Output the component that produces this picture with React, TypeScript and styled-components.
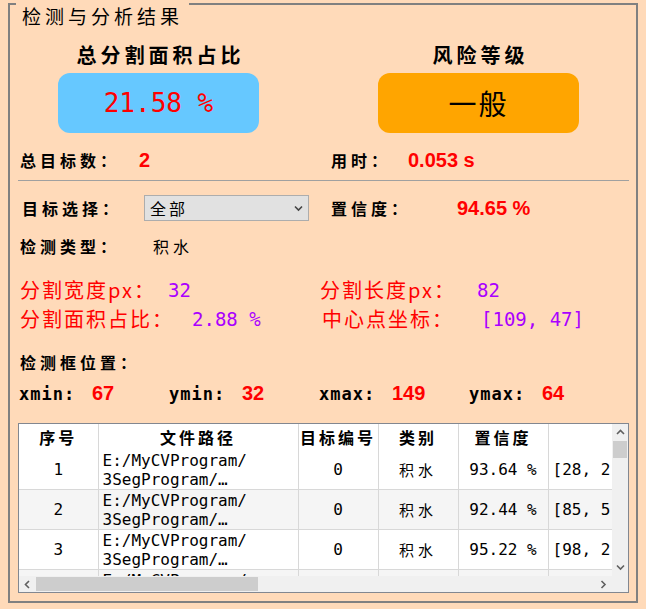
import React from 'react';
import styled, { createGlobalStyle } from 'styled-components';

const GlobalStyle = createGlobalStyle`
  html, body {
    margin: 0;
    padding: 0;
    background: #ffdab9;
  }
  body {
    font-family: "Noto Sans CJK SC", sans-serif;
    color: #000;
  }
`;

const Page = styled.div`
  padding: 3px 8px;
`;

const GroupBox = styled.section`
  position: relative;
  box-sizing: border-box;
  width: 630px;
  height: 600px;
  border: 2px solid #808080;
`;

const GroupTitle = styled.div`
  position: absolute;
  left: 6px;
  top: -3px;
  padding: 0 6px;
  background: #ffdab9;
  font-size: 19px;
  line-height: 28px;
  letter-spacing: 4px;
`;

const Summary = styled.div`
  display: flex;
  gap: 119px;
  padding: 38px 0 0 48px;
`;

const SummaryItem = styled.div`
  width: 201px;
  display: flex;
  flex-direction: column;
  align-items: center;
  gap: 6px;
`;

const SummaryTitle = styled.div`
  font-size: 20px;
  font-weight: bold;
  line-height: 24px;
  letter-spacing: 4px;
  margin-right: -4px;
`;

const Badge = styled.div<{ $bg: string }>`
  width: 100%;
  height: 60px;
  border-radius: 12px;
  background: ${p => p.$bg};
  display: flex;
  align-items: center;
  justify-content: center;
`;

const Percent = styled.span`
  font-family: "DejaVu Sans Mono", monospace;
  font-size: 26px;
  color: #ff0000;
`;

const Level = styled.span`
  font-size: 28px;
  letter-spacing: 2px;
`;

const InfoRow = styled.div<{ $top: number; $height?: number }>`
  display: grid;
  grid-template-columns: 311px 1fr;
  align-items: center;
  height: ${p => p.$height ?? 24}px;
  margin-top: ${p => p.$top}px;
  padding-left: 10px;
`;

const Field = styled.div<{ $indent?: number }>`
  display: flex;
  align-items: center;
  padding-left: ${p => p.$indent ?? 0}px;
`;

const Label = styled.span<{ $width?: number }>`
  flex: none;
  width: ${p => (p.$width ? `${p.$width}px` : 'auto')};
  font-size: 16px;
  font-weight: bold;
  letter-spacing: 4px;
  line-height: 24px;
  white-space: nowrap;
`;

const Value = styled.span`
  font-family: "Liberation Sans", Arial, sans-serif;
  font-weight: bold;
  font-size: 20px;
  color: #ff0000;
  white-space: nowrap;
`;

const Plain = styled.span`
  font-size: 16px;
  letter-spacing: 4px;
`;

const Divider = styled.hr`
  margin: 8px 7px 0 8px;
  border: none;
  border-top: 1px solid #a0a0a0;
  height: 0;
`;

const Combo = styled.div`
  box-sizing: border-box;
  width: 165px;
  height: 26px;
  background: #e1e1e1;
  border: 1px solid #adadad;
  display: flex;
  align-items: center;
  justify-content: space-between;
  padding: 0 5px 0 5px;
  font-size: 16px;
  letter-spacing: 3px;
`;

const MetricGrid = styled.div`
  display: grid;
  grid-template-columns: 300px 1fr;
  grid-auto-rows: 29px;
  align-items: center;
  margin-top: 17px;
  padding-left: 10px;
`;

const Metric = styled.div<{ $indent?: number }>`
  display: flex;
  align-items: center;
  padding-left: ${p => p.$indent ?? 0}px;
`;

const MetricLabel = styled.span<{ $width: number }>`
  flex: none;
  width: ${p => p.$width}px;
  font-size: 20px;
  letter-spacing: 2px;
  color: #ff0000;
  white-space: nowrap;
`;

const MetricValue = styled.span`
  font-family: "DejaVu Sans Mono", monospace;
  font-size: 19px;
  color: #aa00ff;
  white-space: nowrap;
`;

const Section = styled.div<{ $top: number }>`
  margin-top: ${p => p.$top}px;
  padding-left: 10px;
  height: 24px;
  display: flex;
  align-items: center;
`;

const CoordRow = styled.div`
  display: grid;
  grid-template-columns: repeat(4, 150px);
  align-items: center;
  height: 24px;
  margin-top: 7px;
  padding-left: 9px;
`;

const CoordLabel = styled.span`
  display: inline-block;
  width: 73px;
  font-family: "DejaVu Sans Mono", monospace;
  font-weight: bold;
  font-size: 17px;
  letter-spacing: 1px;
`;

const TableFrame = styled.div`
  box-sizing: border-box;
  width: 611px;
  height: 170px;
  margin: 18px 0 0 8px;
  border: 1px solid #828790;
  background: #fff;
  display: grid;
  grid-template-columns: 1fr 16px;
  grid-template-rows: 1fr 16px;
`;

const Viewport = styled.div`
  overflow: hidden;
`;

const DataTable = styled.table`
  border-collapse: collapse;
  table-layout: fixed;
  width: 593px;
`;

const HeadCell = styled.th`
  height: 26px;
  padding: 0;
  font-size: 16px;
  font-weight: bold;
  letter-spacing: 3px;
  text-align: center;
  border-right: 1px solid #d8d8d8;
  white-space: nowrap;
  overflow: hidden;
  &:last-child {
    border-right: none;
  }
`;

const BodyRow = styled.tr<{ $alt: boolean }>`
  background: ${p => (p.$alt ? '#f5f5f5' : '#fff')};
`;

const Cell = styled.td<{ $align?: 'left' | 'center'; $cjk?: boolean }>`
  height: 39px;
  padding: 0 0 0 ${p => (p.$align === 'left' ? '4px' : '0')};
  text-align: ${p => p.$align ?? 'center'};
  vertical-align: middle;
  font-family: ${p => (p.$cjk ? '"Noto Sans CJK SC", sans-serif' : '"DejaVu Sans Mono", monospace')};
  font-size: ${p => (p.$cjk ? 15 : 16)}px;
  letter-spacing: ${p => (p.$cjk ? 4 : 0)}px;
  border-right: 1px solid #d8d8d8;
  border-bottom: 1px solid #d8d8d8;
  white-space: nowrap;
  overflow: hidden;
  &:last-child {
    border-right: none;
  }
`;

const PathLine = styled.div`
  line-height: 19px;
`;

const VScroll = styled.div`
  background: #f0f0f0;
  display: flex;
  flex-direction: column;
`;

const HScroll = styled.div`
  background: #f0f0f0;
  display: flex;
  align-items: stretch;
`;

const Corner = styled.div`
  background: #f0f0f0;
`;

const ArrowButton = styled.div<{ $long?: boolean }>`
  flex: none;
  width: ${p => (p.$long ? 16 : 17)}px;
  height: ${p => (p.$long ? 17 : 16)}px;
  display: flex;
  align-items: center;
  justify-content: center;
`;

const Track = styled.div<{ $vertical?: boolean }>`
  flex: 1;
  display: flex;
  flex-direction: ${p => (p.$vertical ? 'column' : 'row')};
  padding: ${p => (p.$vertical ? '0 1px' : '1px 0')};
`;

const Thumb = styled.div<{ $size: number; $vertical?: boolean }>`
  flex: none;
  background: #cdcdcd;
  ${p => (p.$vertical ? `height: ${p.$size}px;` : `width: ${p.$size}px;`)}
`;

const Chevron = ({ dir, color = '#606060' }: { dir: 'up' | 'down' | 'left' | 'right'; color?: string }) => {
  const paths = {
    up: 'M1 5 L4.5 1.5 L8 5',
    down: 'M1 1.5 L4.5 5 L8 1.5',
    left: 'M5 1 L1.5 4.5 L5 8',
    right: 'M1.5 1 L5 4.5 L1.5 8',
  };
  const horizontal = dir === 'left' || dir === 'right';
  return (
    <svg
      width={horizontal ? 7 : 9}
      height={horizontal ? 9 : 7}
      viewBox={horizontal ? '0 0 7 9' : '0 0 9 7'}
      fill="none"
      stroke={color}
      strokeWidth={1.6}
    >
      <path d={paths[dir]} />
    </svg>
  );
};

type Row = { id: number; target: number; cls: string; conf: string; box: string };

// the box column is scrolled out of view; only its start shows
const rows: Row[] = [
  { id: 1, target: 0, cls: '积水', conf: '93.64 %', box: '[28, 2' },
  { id: 2, target: 0, cls: '积水', conf: '92.44 %', box: '[85, 5' },
  { id: 3, target: 0, cls: '积水', conf: '95.22 %', box: '[98, 2' },
  { id: 4, target: 0, cls: '积水', conf: '94.65 %', box: '[67, 3' },
];

const columns = [79, 200, 80, 80, 90, 64];
const headers = ['序号', '文件路径', '目标编号', '类别', '置信度', ''];

function ResultTable() {
  return (
    <TableFrame>
      <Viewport>
        <DataTable>
          <colgroup>
            {columns.map((w, i) => (
              <col key={i} style={{ width: w }} />
            ))}
          </colgroup>
          <thead>
            <tr>
              {headers.map((h, i) => (
                <HeadCell key={i}>{h}</HeadCell>
              ))}
            </tr>
          </thead>
          <tbody>
            {rows.map((r, i) => (
              <BodyRow key={r.id} $alt={i % 2 === 1}>
                <Cell>{r.id}</Cell>
                <Cell $align="left">
                  <PathLine>E:/MyCVProgram/</PathLine>
                  <PathLine>3SegProgram/…</PathLine>
                </Cell>
                <Cell>{r.target}</Cell>
                <Cell $cjk>{r.cls}</Cell>
                <Cell>{r.conf}</Cell>
                <Cell $align="left">{r.box}</Cell>
              </BodyRow>
            ))}
          </tbody>
        </DataTable>
      </Viewport>
      <VScroll>
        <ArrowButton $long>
          <Chevron dir="up" />
        </ArrowButton>
        <Track $vertical>
          <Thumb $vertical $size={17} />
        </Track>
        <ArrowButton $long>
          <Chevron dir="down" />
        </ArrowButton>
      </VScroll>
      <HScroll>
        <ArrowButton>
          <Chevron dir="left" />
        </ArrowButton>
        <Track>
          <Thumb $size={222} />
        </Track>
        <ArrowButton>
          <Chevron dir="right" />
        </ArrowButton>
      </HScroll>
      <Corner />
    </TableFrame>
  );
}

export default function App() {
  return (
    <Page>
      <GlobalStyle />
      <GroupBox>
        <GroupTitle>检测与分析结果</GroupTitle>

        <Summary>
          <SummaryItem>
            <SummaryTitle>总分割面积占比</SummaryTitle>
            <Badge $bg="#66c8ff">
              <Percent>21.58 %</Percent>
            </Badge>
          </SummaryItem>
          <SummaryItem>
            <SummaryTitle>风险等级</SummaryTitle>
            <Badge $bg="#ffa500">
              <Level>一般</Level>
            </Badge>
          </SummaryItem>
        </Summary>

        <InfoRow $top={15}>
          <Field>
            <Label $width={119}>总目标数：</Label>
            <Value>2</Value>
          </Field>
          <Field>
            <Label $width={77}>用时：</Label>
            <Value>0.053 s</Value>
          </Field>
        </InfoRow>

        <Divider />

        <InfoRow $top={14} $height={26}>
          <Field $indent={2}>
            <Label $width={122}>目标选择：</Label>
            <Combo>
              <span>全部</span>
              <Chevron dir="down" color="#444" />
            </Combo>
          </Field>
          <Field>
            <Label $width={126}>置信度：</Label>
            <Value>94.65 %</Value>
          </Field>
        </InfoRow>

        <Section $top={13}>
          <Label $width={133}>检测类型：</Label>
          <Plain>积水</Plain>
        </Section>

        <MetricGrid>
          <Metric>
            <MetricLabel $width={148}>分割宽度px：</MetricLabel>
            <MetricValue>32</MetricValue>
          </Metric>
          <Metric>
            <MetricLabel $width={157}>分割长度px：</MetricLabel>
            <MetricValue>82</MetricValue>
          </Metric>
          <Metric>
            <MetricLabel $width={172}>分割面积占比：</MetricLabel>
            <MetricValue>2.88 %</MetricValue>
          </Metric>
          <Metric $indent={2}>
            <MetricLabel $width={159}>中心点坐标：</MetricLabel>
            <MetricValue>[109, 47]</MetricValue>
          </Metric>
        </MetricGrid>

        <Section $top={17}>
          <Label>检测框位置：</Label>
        </Section>

        <CoordRow>
          <span>
            <CoordLabel>xmin:</CoordLabel>
            <Value>67</Value>
          </span>
          <span>
            <CoordLabel>ymin:</CoordLabel>
            <Value>32</Value>
          </span>
          <span>
            <CoordLabel>xmax:</CoordLabel>
            <Value>149</Value>
          </span>
          <span>
            <CoordLabel>ymax:</CoordLabel>
            <Value>64</Value>
          </span>
        </CoordRow>

        <ResultTable />
      </GroupBox>
    </Page>
  );
}
